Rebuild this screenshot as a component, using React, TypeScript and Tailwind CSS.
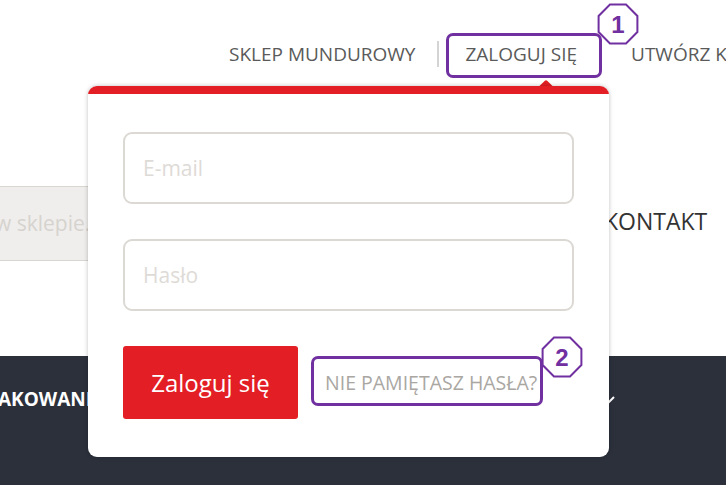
import React from "react";

function Octagon({ n, className }: { n: string; className: string }) {
  const r = 21;
  const pts: string[] = [];
  for (let i = 0; i < 8; i++) {
    const a = ((22.5 + i * 45) * Math.PI) / 180;
    pts.push(`${22 + r * Math.cos(a)},${22 + r * Math.sin(a)}`);
  }
  return (
    <div className={`absolute ${className}`}>
      <svg width="44" height="44" viewBox="0 0 44 44">
        <polygon points={pts.join(" ")} fill="white" stroke="#7030a0" strokeWidth="2" />
        <text
          x="22"
          y="30.5"
          textAnchor="middle"
          fontFamily="Liberation Sans, Arial, sans-serif"
          fontWeight="700"
          fontSize="24"
          fill="#7030a0"
        >
          {n}
        </text>
      </svg>
    </div>
  );
}

export default function App() {
  return (
    <div
      className="relative w-[726px] h-[485px] overflow-hidden bg-white"
      style={{ fontFamily: '"Open Sans", "Noto Sans", sans-serif' }}
    >
      {/* top nav */}
      <div className="flex items-center h-[32px] mt-[38px] text-[19px] text-[#5a5a5a] whitespace-nowrap">
        <span className="ml-[229px]">SKLEP MUNDUROWY</span>
        <div className="ml-[22px] w-[2px] h-[26px] bg-[#d4d4d4] shrink-0" />
        <span className="ml-[26px]">ZALOGUJ SIĘ</span>
        <div className="ml-[23px] w-[2px] h-[26px] bg-[#d4d4d4] shrink-0" />
        <span className="ml-[29px]">UTWÓRZ KONTO</span>
      </div>

      {/* search row */}
      <div className="flex items-center mt-[116px] h-[75px]">
        <div className="w-[560px] h-full bg-[#efeeec] border-y border-[#d9d6d2] flex items-center text-[21px] text-[#d6d3cf] whitespace-nowrap">
          <span className="ml-[-5px]">w sklepie...</span>
        </div>
        <span className="ml-[44px] text-[23px] text-[#333] mt-[-4px]">KONTAKT</span>
      </div>

      {/* dark band */}
      <div className="relative mt-[95px] h-[130px] bg-[#2b303b] flex items-start">
        <span className="ml-[-2px] mt-[29px] text-[19px] font-bold text-white whitespace-nowrap">
          AKOWANIA
        </span>
        <svg className="absolute left-[598px] top-[38px]" width="18" height="12" viewBox="0 0 18 12">
          <path d="M2 3 L9 10 L16 3" stroke="white" strokeWidth="2" fill="none" />
        </svg>
      </div>

      {/* annotation box 1 */}
      <div className="absolute left-[446px] top-[33px] w-[156px] h-[45px] border-[3px] border-[#7030a0] rounded-[7px]" />
      <Octagon n="1" className="left-[596px] top-[2px]" />

      {/* popup */}
      <div className="absolute left-[88px] top-[86px] w-[521px] h-[371px]">
        <div className="absolute left-[452px] top-[-4px] w-[12px] h-[12px] bg-[#e31e24] rotate-45 rounded-[2px]" />
        <div className="relative w-full h-full bg-white rounded-[9px] shadow-[0_0_4px_rgba(0,0,0,0.25)] overflow-hidden flex flex-col">
          <div className="h-[8px] bg-[#e31e24] shrink-0" />
          <div className="flex flex-col px-[35px] pt-[38px]">
            <div className="h-[72px] border-2 border-[#dcd9d4] rounded-[9px] flex items-center pl-[18px] text-[21px] text-[#dedbd7]">
              <span className="mt-[2px]">E-mail</span>
            </div>
            <div className="mt-[35px] h-[72px] border-2 border-[#dcd9d4] rounded-[9px] flex items-center pl-[18px] text-[21px] text-[#dedbd7]">
              <span className="mt-[2px]">Hasło</span>
            </div>
            <div className="mt-[35px] flex items-center">
              <div className="w-[175px] h-[73px] bg-[#e31e24] rounded-[3px] flex items-center justify-center text-[24px] text-white">
                Zaloguj się
              </div>
              <span className="ml-[27px] text-[19.5px] text-[#aaa7a3] whitespace-nowrap">
                NIE PAMIĘTASZ HASŁA?
              </span>
            </div>
          </div>
        </div>
      </div>

      {/* annotation box 2 */}
      <div className="absolute left-[311px] top-[356px] w-[232px] h-[50px] border-[3px] border-[#7030a0] rounded-[7px]" />
      <Octagon n="2" className="left-[540px] top-[335px]" />
    </div>
  );
}
